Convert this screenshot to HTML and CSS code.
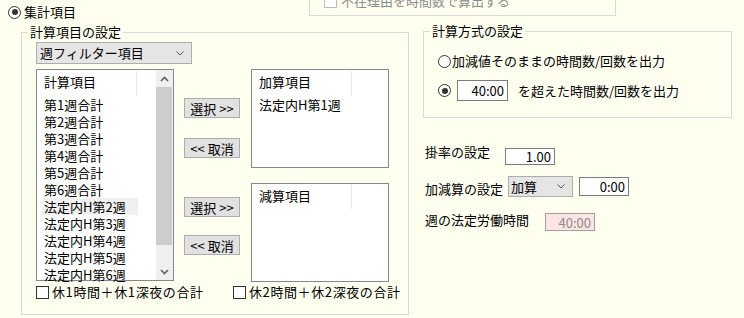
FILE: index.html
```html
<!DOCTYPE html>
<html lang="ja">
<head>
    <meta charset="UTF-8">
    <meta name="viewport" content="width=device-width, initial-scale=1.0">
    <title>集計項目の設定</title>
    <link rel="stylesheet" href="styles.css">
</head>
<body>
    <div class="top">
        <label class="opt"><span class="radio on"></span>集計項目</label>
        <div class="cut-box">
            <div class="cut-row"><span class="check dim"></span>不在理由を時間数で算出する</div>
        </div>
    </div>

    <div class="main">
        <fieldset class="group items-group">
            <legend>計算項目の設定</legend>
            <div class="inner">
                <div class="combo wide">
                    <span>週フィルター項目</span>
                    <svg width="8" height="5" viewBox="0 0 8 5"><polyline points="0.5,0.5 4,4 7.5,0.5" fill="none" stroke="#555" stroke-width="1"/></svg>
                </div>

                <div class="lists">
                    <div class="listbox tall">
                        <div class="list-body">
                            <div class="list-head"><span>計算項目</span></div>
                            <div class="item">第1週合計</div>
                            <div class="item">第2週合計</div>
                            <div class="item">第3週合計</div>
                            <div class="item">第4週合計</div>
                            <div class="item">第5週合計</div>
                            <div class="item">第6週合計</div>
                            <div class="item hot">法定内H第2週</div>
                            <div class="item">法定内H第3週</div>
                            <div class="item">法定内H第4週</div>
                            <div class="item">法定内H第5週</div>
                            <div class="item">法定内H第6週</div>
                        </div>
                        <div class="scrollbar">
                            <div class="arrow">
                                <svg width="9" height="6" viewBox="0 0 9 6"><polyline points="1,5 4.5,1.5 8,5" fill="none" stroke="#606060" stroke-width="1.6"/></svg>
                            </div>
                            <div class="thumb"></div>
                            <div class="track"></div>
                            <div class="arrow">
                                <svg width="9" height="6" viewBox="0 0 9 6"><polyline points="1,1 4.5,4.5 8,1" fill="none" stroke="#606060" stroke-width="1.6"/></svg>
                            </div>
                        </div>
                    </div>

                    <div class="buttons">
                        <button class="btn b1">選択 &gt;&gt;</button>
                        <button class="btn b2">&lt;&lt; 取消</button>
                        <button class="btn b3">選択 &gt;&gt;</button>
                        <button class="btn b4">&lt;&lt; 取消</button>
                    </div>

                    <div class="targets">
                        <div class="listbox short">
                            <div class="list-body">
                                <div class="list-head"><span>加算項目</span></div>
                                <div class="item">法定内H第1週</div>
                            </div>
                        </div>
                        <div class="listbox short">
                            <div class="list-body">
                                <div class="list-head"><span>減算項目</span></div>
                            </div>
                        </div>
                    </div>
                </div>

                <div class="checks">
                    <label class="opt first"><span class="check"></span>休1時間＋休1深夜の合計</label>
                    <label class="opt"><span class="check"></span>休2時間＋休2深夜の合計</label>
                </div>
            </div>
        </fieldset>

        <div class="side">
            <fieldset class="group method">
                <legend>計算方式の設定</legend>
                <div class="inner">
                    <label class="opt tight"><span class="radio"></span>加減値そのままの時間数/回数を出力</label>
                    <div class="opt row-limit">
                        <span class="radio on"></span>
                        <span class="field limit">40:00</span>
                        <span class="after">を超えた時間数/回数を出力</span>
                    </div>
                </div>
            </fieldset>

            <div class="settings">
                <div class="set-row r1">
                    <span class="set-label w80">掛率の設定</span>
                    <span class="field small">1.00</span>
                </div>
                <div class="set-row r2">
                    <span class="set-label w83">加減算の設定</span>
                    <div class="combo mode">
                        <span>加算</span>
                        <svg width="8" height="5" viewBox="0 0 8 5"><polyline points="0.5,0.5 4,4 7.5,0.5" fill="none" stroke="#555" stroke-width="1"/></svg>
                    </div>
                    <span class="field small offset">0:00</span>
                </div>
                <div class="set-row r3">
                    <span class="set-label w120">週の法定労働時間</span>
                    <span class="field small locked">40:00</span>
                </div>
            </div>
        </div>
    </div>
</body>
</html>
```

FILE: styles.css
```css
body {
    margin: 0;
    background-color: #fffff0;
    font-family: "Noto Sans CJK JP", "Noto Sans", sans-serif;
    font-size: 13px;
    line-height: 16px;
    color: #000;
}

/* top band */
.top {
    display: grid;
    grid-template-columns: 309px 307px;
    height: 20px;
}

.top > .opt {
    padding: 4px 0 0 8px;
    align-self: start;
}

.cut-box {
    height: 16px;
    box-sizing: border-box;
    border: 1px solid #d9d9d9;
    border-top: none;
}

.cut-row {
    display: flex;
    align-items: center;
    margin-top: -7px;
    padding-left: 14px;
    color: #8c8c8c;
}

.cut-row .check {
    margin-right: 4px;
}

/* radios / checkboxes */
.opt {
    display: flex;
    align-items: center;
    gap: 3px;
}

.radio {
    width: 13px;
    height: 13px;
    box-sizing: border-box;
    border: 1px solid #333;
    border-radius: 50%;
    background: #fff;
    display: flex;
    align-items: center;
    justify-content: center;
    flex: none;
}

.radio.on::after {
    content: "";
    width: 6px;
    height: 6px;
    border-radius: 50%;
    background: #333;
}

.check {
    width: 13px;
    height: 13px;
    box-sizing: border-box;
    border: 1px solid #333;
    background: #fff;
    flex: none;
}

.check.dim {
    border-color: #bcbcbc;
}

/* layout */
.main {
    display: flex;
    align-items: flex-start;
}

.group {
    margin: 0;
    padding: 0 0 0 6px;
    border: 1px solid #d9d9d9;
    box-sizing: border-box;
    min-width: 0;
}

.group legend {
    padding: 0 2px;
    line-height: 16px;
}

.group .inner {
    margin-left: 8px;
}

.items-group {
    width: 388px;
    margin: 4px 0 0 21px;
    padding-top: 2px;
    padding-bottom: 14px;
}

/* combo boxes */
.combo {
    display: flex;
    align-items: center;
    justify-content: space-between;
    box-sizing: border-box;
    border: 1px solid #adadad;
    background: #e5e5e5;
    padding: 0 7px 0 3px;
}

.combo.wide {
    width: 156px;
    height: 22px;
}

.combo.mode {
    width: 65px;
    height: 21px;
    padding-left: 2px;
}

/* lists */
.lists {
    display: grid;
    grid-template-columns: 138px 56px 138px;
    column-gap: 10px;
    margin-top: 5px;
}

.lists .targets {
    margin-left: 1px;
    display: flex;
    flex-direction: column;
    gap: 15px;
}

.listbox {
    display: flex;
    box-sizing: border-box;
    border: 1px solid #828790;
    background: #fff;
    width: 138px;
}

.listbox.tall {
    height: 212px;
}

.listbox.short {
    height: 99px;
}

.list-body {
    flex: 1;
}

.list-head {
    height: 25px;
}

.list-head span {
    display: block;
    width: 100px;
    height: 24px;
    margin-top: 1px;
    box-sizing: border-box;
    border-right: 1px solid #e5e5e5;
    padding-left: 7px;
    line-height: 22px;
}

.item {
    width: 96px;
    height: 17px;
    margin-left: 5px;
    padding-left: 2px;
    box-sizing: border-box;
    line-height: 17px;
    white-space: nowrap;
}

.item.hot {
    background: #f0f0f0;
}

.scrollbar {
    width: 17px;
    display: flex;
    flex-direction: column;
    background: #f0f0f0;
}

.scrollbar .arrow {
    height: 17px;
    display: flex;
    align-items: center;
    justify-content: center;
}

.scrollbar .thumb {
    height: 158px;
    margin: 0 1px 0 0;
    background: #cdcdcd;
}

.scrollbar .track {
    flex: 1;
}

/* buttons */
.buttons {
    display: flex;
    flex-direction: column;
}

.btn {
    width: 56px;
    height: 20px;
    padding: 0;
    border: 1px solid #adadad;
    background: #e1e1e1;
    font: inherit;
    line-height: 17px;
    color: #000;
}

.b1 { margin-top: 29px; }
.b2 { margin-top: 20px; }
.b3 { margin-top: 39px; }
.b4 { margin-top: 18px; }

.checks {
    display: flex;
    margin-top: 2px;
    height: 16px;
    letter-spacing: 0.6px;
}

.checks .first {
    width: 197px;
}

/* right side */
.side {
    margin-left: 14px;
}

.method {
    width: 309px;
    margin-top: 3px;
    padding-top: 14px;
    padding-bottom: 16px;
}

.opt.tight {
    gap: 1px;
}

.row-limit {
    margin-top: 11px;
    gap: 0;
}

.row-limit .limit {
    width: 51px;
    height: 21px;
    margin-left: 6px;
}

.row-limit .after {
    margin-left: 10px;
}

.field {
    display: block;
    box-sizing: border-box;
    border: 1px solid #7a7a7a;
    background: #fff;
    text-align: right;
    padding-right: 3px;
    line-height: 17px;
}

.row-limit .field {
    line-height: 19px;
}

.settings {
    margin-top: 26px;
    padding-left: 2px;
}

.set-row {
    display: flex;
    align-items: center;
}

.set-label {
    flex: none;
}

.w80 { width: 80px; }
.w83 { width: 83px; }
.w120 { width: 120px; }

.field.small {
    width: 50px;
    height: 18px;
}

.r1 {
    align-items: flex-start;
}

.r1 .field {
    height: 17px;
    margin-top: 4px;
    line-height: 15px;
}

.r2 {
    margin-top: 11px;
}

.r2 .set-label {
    padding-top: 4px;
}

.r2 .offset {
    height: 19px;
    margin-left: 6px;
}

.r3 {
    margin-top: 15px;
}

.r3 .set-label {
    padding-bottom: 3px;
}

.field.locked {
    background: #ffe4e4;
    border-color: #a0a0a0;
    color: #8c8c8c;
}
```
